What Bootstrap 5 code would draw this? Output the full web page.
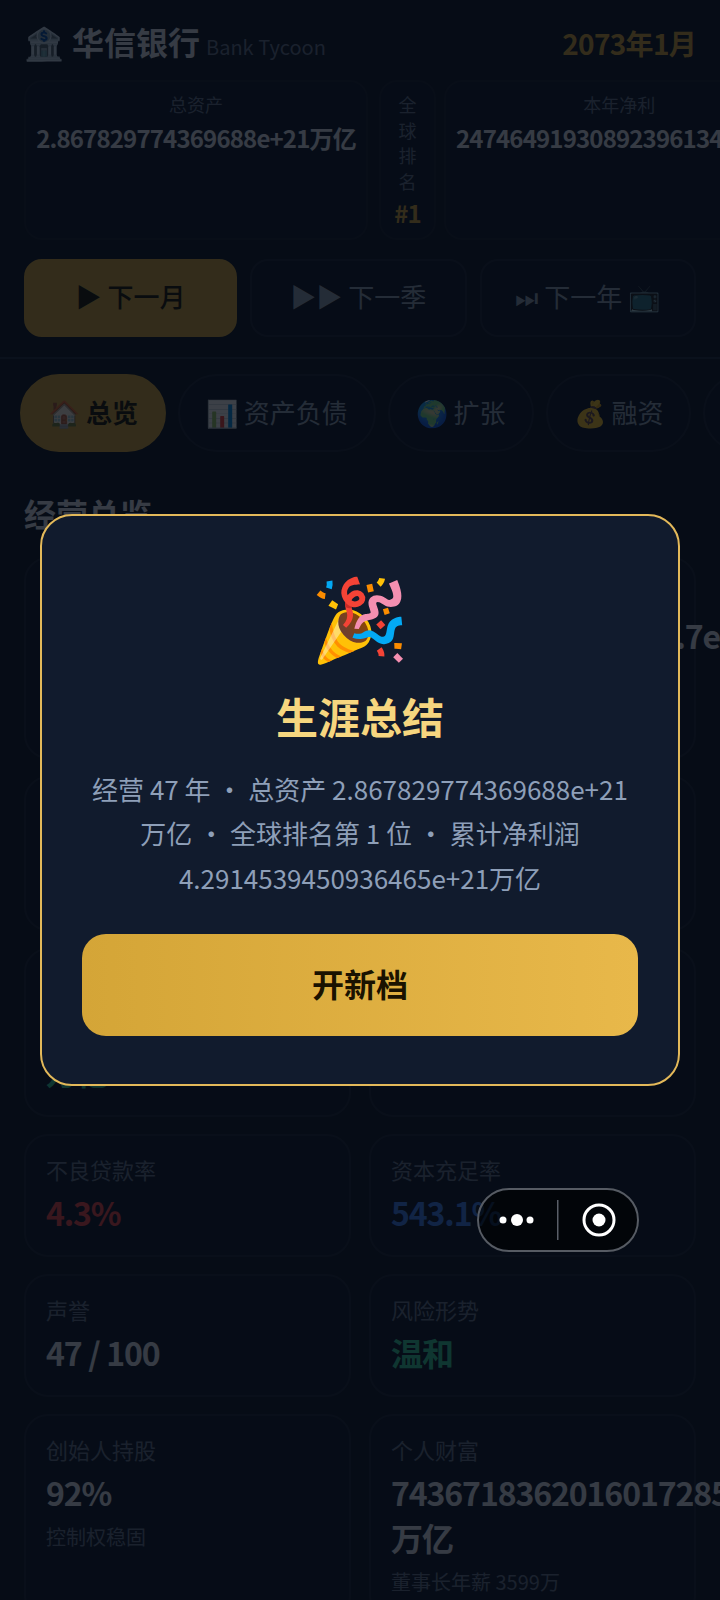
<!DOCTYPE html>
<html lang="zh-CN">
<head>
  <meta charset="UTF-8" />
  <title>华信银行 Bank Tycoon</title>
  <link href="https://cdn.jsdelivr.net/npm/bootstrap@5.3.3/dist/css/bootstrap.min.css" rel="stylesheet" />
  <style>
    html, body { height: 1600px; overflow: hidden; }
    body {
      background: #0b1220;
      color: #e2e8f0;
      font-family: "Noto Sans CJK SC", "Noto Sans", sans-serif;
    }
    .bank-head { padding: 18px 24px 0; height: 80px; }
    .bank-logo { font-size: 32px; line-height: 46px; }
    .bank-name { font-size: 32px; font-weight: 700; line-height: 46px; }
    .bank-en { margin-left: -2px; font-size: 20px; color: #64748b; }
    .bank-date { font-size: 28px; font-weight: 700; line-height: 50px; letter-spacing: -.7px; color: #d4a537; }

    .stat-row { height: 160px; margin-bottom: 7px; padding: 0 24px; gap: 11px; }
    .stat-tile {
      flex: 0 0 auto;
      padding: 10px 10px 4px;
      text-align: center;
      background: #0c1424;
      border: 2px solid #141c2b;
      border-radius: 18px;
    }
    .stat-label { font-size: 18px; line-height: 25.6px; color: #64748b; }
    .stat-val { margin-top: 2px; font-size: 24px; font-weight: 700; line-height: 36px; letter-spacing: -.83px; white-space: nowrap; }
    .stat-rank { width: 57px; }
    .stat-rank .stat-val { margin-top: 1px; color: #d4a537; }
    .stat-tile:first-child { width: 344px; }
    .stat-net { margin-left: -3px; }

    .step-row { padding: 12px 24px 20px; gap: 13px; border-bottom: 2px solid #1e293b; height: 112px; }
    .step-btn.btn {
      flex: 1 1 0;
      font-size: 26px;
      line-height: 40px;
      padding: 0 0 4px;
      color: #94a3b8;
      background: #0c1424;
      border: 2px solid #1a2333;
      border-radius: 18px;
      white-space: nowrap;
    }
    .step-btn.step-on.btn { flex: 0 0 213px; background: #d4a537; border-color: #d4a537; color: #1a1200; font-weight: 500; }

    .tab-row { padding: 15px 20px 0; gap: 12px; height: 94px; }
    .tab-pill.btn {
      flex: 0 0 auto;
      height: 78px;
      padding: 0 26px 3px;
      font-size: 26px;
      color: #94a3b8;
      background: #0c1424;
      border: 2px solid #1a2333;
      border-radius: 39px;
      white-space: nowrap;
    }
    .tab-pill.tab-on.btn { background: #d4a537; border-color: #d4a537; color: #1a1200; font-weight: 700; }

    .sect-title { margin: 36px 24px 0; font-size: 32px; font-weight: 700; line-height: 48px; height: 68px; }

    .kpi-grid {
      display: grid;
      grid-template-columns: 327px 327px;
      gap: 17px 18px;
      padding: 0 24px;
    }
    .kpi-tile {
      padding: 17px 20px 20px;
      min-width: 0;
      background: #0c1424;
      border: 2px solid #1a2333;
      border-radius: 24px;
    }
    .kpi-top { padding-bottom: 17px; }
    .kpi-slim { padding-bottom: 15px; }
    .kpi-tall { padding-bottom: 21px; }
    .kpi-label { font-size: 22px; line-height: 33px; color: #64748b; }
    .kpi-val { margin-top: 4px; font-size: 32px; font-weight: 700; line-height: 45px; letter-spacing: -1.1px; word-spacing: .5px; }
    .kpi-sub { margin-top: 7px; font-size: 20px; line-height: 30px; color: #64748b; }
    .val-green { color: #34d399; }
    .val-red { color: #ef4444; }
    .val-blue { color: #3b82f6; }

    .end-overlay { z-index: 20; background: rgba(5, 10, 19, .78); }
    .end-box {
      width: 640px;
      padding: 48px 40px;
      text-align: center;
      background: #111b2d;
      border: 2px solid #e3b95a;
      border-radius: 32px;
    }
    .end-emoji { font-size: 80px; line-height: 98px; }
    .end-title { margin: 22px 0 0; font-size: 42px; font-weight: 700; line-height: 63px; color: #f6d67f; }
    .end-text { margin: 20px 0 0; font-size: 26px; line-height: 44.2px; color: #8e9fb8; }
    .end-btn.btn {
      display: block;
      width: 100%;
      height: 102px;
      margin-top: 34px;
      padding: 0 0 4px;
      font-size: 32px;
      font-weight: 700;
      color: #1a1200;
      border: 0;
      border-radius: 24px;
      background: linear-gradient(90deg, #d4a537, #e8b84a);
    }

    .wx-capsule {
      z-index: 30;
      top: 1188px;
      left: 477px;
      width: 162px;
      height: 64px;
      background: rgba(0, 0, 0, .55);
      border: 2px solid #565b63;
      border-radius: 32px;
    }
  </style>
</head>
<body>
  <header>
    <div class="bank-head d-flex justify-content-between align-items-start">
      <div class="d-flex align-items-baseline gap-2">
        <span class="bank-logo">🏦</span>
        <span class="bank-name">华信银行</span>
        <span class="bank-en">Bank Tycoon</span>
      </div>
      <div class="bank-date">2073年1月</div>
    </div>

    <div class="stat-row d-flex overflow-hidden">
      <div class="stat-tile">
        <div class="stat-label">总资产</div>
        <div class="stat-val">2.867829774369688e+21万亿</div>
      </div>
      <div class="stat-tile stat-rank">
        <div class="stat-label">全球排名</div>
        <div class="stat-val">#1</div>
      </div>
      <div class="stat-tile stat-net">
        <div class="stat-label">本年净利</div>
        <div class="stat-val">247464919308923961344万亿</div>
      </div>
    </div>

    <div class="step-row d-flex">
      <button class="btn step-btn step-on" type="button">▶ 下一月</button>
      <button class="btn step-btn" type="button">▶▶ 下一季</button>
      <button class="btn step-btn" type="button">⏭ 下一年 📺</button>
    </div>
  </header>

  <nav class="tab-row d-flex">
    <button class="btn tab-pill tab-on" type="button">🏠 总览</button>
    <button class="btn tab-pill" type="button">📊 资产负债</button>
    <button class="btn tab-pill" type="button">🌍 扩张</button>
    <button class="btn tab-pill" type="button">💰 融资</button>
    <button class="btn tab-pill" type="button">📈 市场</button>
  </nav>

  <main>
    <h2 class="sect-title">经营总览</h2>
    <div class="kpi-grid">
      <div class="kpi-tile kpi-top">
        <div class="kpi-label">总资产</div>
        <div class="kpi-val">2.867829774369688e+21万亿</div>
        <div class="kpi-sub">全球第 1 位</div>
      </div>
      <div class="kpi-tile kpi-top">
        <div class="kpi-label">总负债</div>
        <div class="kpi-val">2467829774369688.7e+21万亿</div>
      </div>
      <div class="kpi-tile kpi-slim">
        <div class="kpi-label">存款余额</div>
        <div class="kpi-val">1.9万亿</div>
        <div class="kpi-sub">本月</div>
      </div>
      <div class="kpi-tile kpi-slim">
        <div class="kpi-label">贷款余额</div>
        <div class="kpi-val">1.5万亿</div>
        <div class="kpi-sub">本月</div>
      </div>
      <div class="kpi-tile kpi-tall">
        <div class="kpi-label">本年净利润</div>
        <div class="kpi-val val-green">247464919308923961344万亿</div>
      </div>
      <div class="kpi-tile kpi-tall">
        <div class="kpi-label">累计净利润</div>
        <div class="kpi-val">4.29万亿</div>
      </div>
      <div class="kpi-tile">
        <div class="kpi-label">不良贷款率</div>
        <div class="kpi-val val-red">4.3%</div>
      </div>
      <div class="kpi-tile">
        <div class="kpi-label">资本充足率</div>
        <div class="kpi-val val-blue">543.1%</div>
      </div>
      <div class="kpi-tile">
        <div class="kpi-label">声誉</div>
        <div class="kpi-val">47 / 100</div>
      </div>
      <div class="kpi-tile">
        <div class="kpi-label">风险形势</div>
        <div class="kpi-val val-green">温和</div>
      </div>
      <div class="kpi-tile">
        <div class="kpi-label">创始人持股</div>
        <div class="kpi-val">92%</div>
        <div class="kpi-sub">控制权稳固</div>
      </div>
      <div class="kpi-tile">
        <div class="kpi-label">个人财富</div>
        <div class="kpi-val">74367183620160172851万亿</div>
        <div class="kpi-sub">董事长年薪 3599万</div>
      </div>
    </div>
  </main>

  <div class="end-overlay position-fixed top-0 start-0 w-100 h-100 d-flex align-items-center justify-content-center">
    <div class="end-box">
      <div class="end-emoji">🎉</div>
      <h3 class="end-title">生涯总结</h3>
      <p class="end-text">经营 47 年 ・ 总资产 2.867829774369688e+21万亿 ・ 全球排名第 1 位 ・ 累计净利润 4.2914539450936465e+21万亿</p>
      <button class="btn end-btn" type="button">开新档</button>
    </div>
  </div>

  <div class="wx-capsule position-fixed">
    <svg width="158" height="60" viewBox="0 0 158 60">
      <circle cx="24" cy="30" r="3.5" fill="#fff" />
      <circle cx="38" cy="30" r="6" fill="#fff" />
      <circle cx="51" cy="30" r="3.5" fill="#fff" />
      <rect x="78" y="10" width="1.5" height="40" fill="#5a5f68" />
      <circle cx="120" cy="30" r="15" fill="none" stroke="#fff" stroke-width="3" />
      <circle cx="120" cy="30" r="6.5" fill="#fff" />
    </svg>
  </div>

  <script src="https://cdn.jsdelivr.net/npm/bootstrap@5.3.3/dist/js/bootstrap.bundle.min.js"></script>
</body>
</html>
